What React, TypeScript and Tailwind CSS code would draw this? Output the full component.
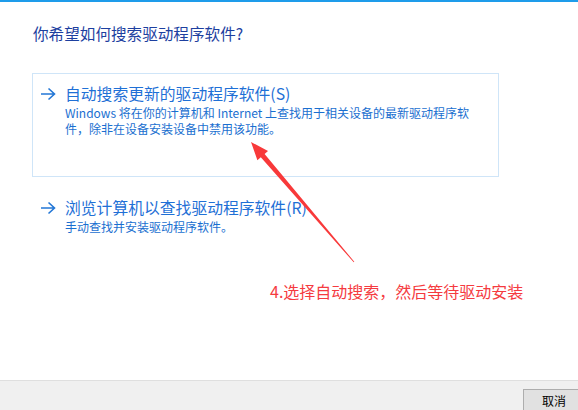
import React from "react";

const cjk = { fontFamily: '"Noto Sans CJK SC", "Noto Sans", sans-serif' };

function Arrow() {
  return (
    <svg width="16" height="14" viewBox="0 0 16 14" className="shrink-0">
      <path d="M1 7 H14.5 M8.5 1.5 L14.5 7 L8.5 12.5" stroke="#2377d6" strokeWidth="1.6" fill="none" />
    </svg>
  );
}

function Option({ title, desc, boxed }: { title: string; desc: string[]; boxed?: boolean }) {
  return (
    <div
      className={`ml-[32px] w-[467px] border ${boxed ? "border-[#cfe5f8] h-[104px]" : "border-transparent"} pt-[10px] pl-[7px]`}
    >
      <div className="flex items-center h-[20px]">
        <Arrow />
        <span className="ml-[9px] text-[15.8px] leading-[20px] text-[#1f70d6] whitespace-nowrap">{title}</span>
      </div>
      <div className="ml-[25px] mt-[1px] text-[12px] leading-[16px] text-[#1a6fd0]">
        {desc.map((d, i) => (
          <div key={i} className="whitespace-nowrap">{d}</div>
        ))}
      </div>
    </div>
  );
}

export default function App() {
  return (
    <div className="w-[578px] h-[410px] bg-white flex flex-col relative overflow-hidden" style={cjk}>
      <div className="h-[2px] bg-[#1e9cea]" />
      <div className="flex-1 flex flex-col">
        <div className="mt-[21px] ml-[33px] text-[15.6px] leading-[20px] text-[#1d3f9f]">你希望如何搜索驱动程序软件?</div>
        <div className="mt-[30px]">
          <Option
            boxed
            title="自动搜索更新的驱动程序软件(S)"
            desc={[
              "Windows 将在你的计算机和 Internet 上查找用于相关设备的最新驱动程序软",
              "件，除非在设备安装设备中禁用该功能。",
            ]}
          />
        </div>
        <div className="mt-[10px]">
          <Option title="浏览计算机以查找驱动程序软件(R)" desc={["手动查找并安装驱动程序软件。"]} />
        </div>
      </div>
      <div className="h-[30px] bg-[#f0f0f0] border-t border-[#dfdfdf] flex justify-end pt-[8px]">
        <div className="w-[66px] h-[24px] -mr-[11px] bg-[#e1e1e1] border border-[#adadad] flex items-center justify-center pr-[4px] text-[12px] text-black">
          取消
        </div>
      </div>

      <svg className="absolute left-0 top-0 pointer-events-none" width="578" height="410">
        <polygon
          points="251,142 268,151.1 264.6,154.1 354.3,261.7 353.7,262.3 260.8,157.3 257.4,160.3"
          fill="#f8393a"
        />
      </svg>
      <div className="absolute left-[270px] top-[281px] text-[16px] leading-[20px] text-[#f53b3f] whitespace-nowrap">
        4.选择自动搜索，然后等待驱动安装
      </div>
    </div>
  );
}
